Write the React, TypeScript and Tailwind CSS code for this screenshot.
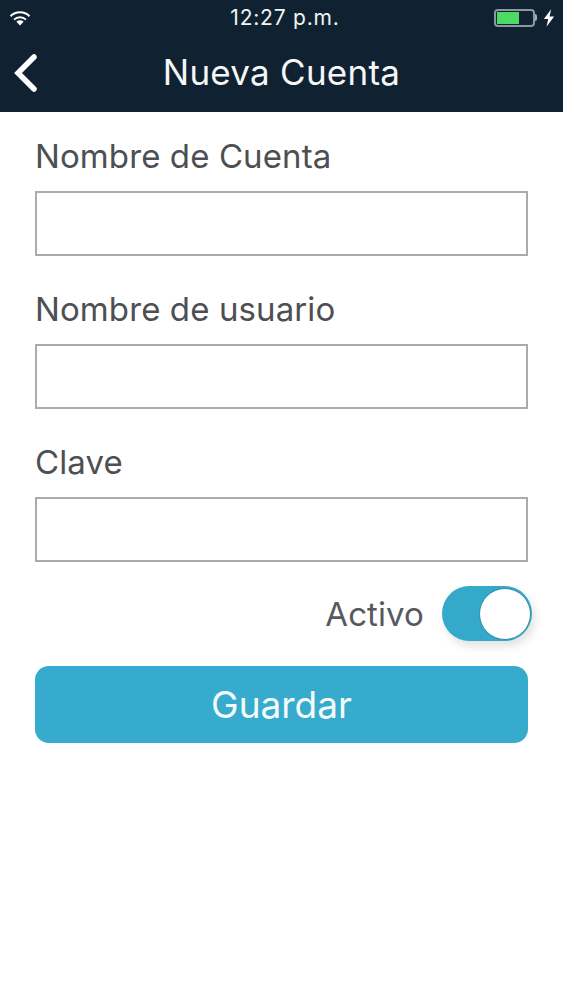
import React from "react";

function Field({ label }: { label: string }) {
  return (
    <div className="flex flex-col">
      <div className="h-[40px] flex items-center text-[33px] leading-[40px] text-[#4d4f52] tracking-[0.1px] mt-[-1px] mb-[1px]">{label}</div>
      <div className="mt-[14px] h-[65px] border-2 border-[#ababab] bg-white" />
    </div>
  );
}

export default function App() {
  return (
    <div className="w-[563px] h-[1000px] bg-white overflow-hidden font-['Inter','Liberation_Sans',sans-serif]">
      <header className="h-[112px] bg-[#102231] text-white flex flex-col">
        <div className="h-[36px] px-[9px] flex items-center justify-between relative">
          <svg width="22" height="16" viewBox="0 0 22 16">
            <path d="M1.5 6.2 A13.5 13.5 0 0 1 20.5 6.2" fill="none" stroke="white" strokeWidth="2" />
            <path d="M5 9.6 A8.6 8.6 0 0 1 17 9.6" fill="none" stroke="white" strokeWidth="2" />
            <path d="M11 15.5 L7.4 11.8 A5.2 5.2 0 0 1 14.6 11.8 Z" fill="white" />
          </svg>
          <div className="absolute left-0 right-0 pl-[7px] text-center text-[21px] leading-[36px] tracking-[0.8px] text-[#f2f4f5]">12:27 p.m.</div>
          <div className="flex items-center gap-[3px] mt-[-1px] mr-[-1px]">
            <div className="w-[41px] h-[18px] border-2 border-[#8d979e] rounded-[4px] p-[1px] flex">
              <div className="w-[22px] bg-[#4cd964]" />
            </div>
            <div className="w-[2px] h-[7px] bg-[#a5adb3] ml-[-3px] rounded-r-[2px]" />
            <svg width="12" height="18" viewBox="0 0 11 16" className="ml-[3px]">
              <path d="M7.5 0 L0.8 9 H4.8 L3.2 16 L10.2 6.6 H6 Z" fill="white" />
            </svg>
          </div>
        </div>
        <div className="flex-1 relative flex items-center justify-center">
          <svg width="26" height="40" viewBox="0 0 26 40" className="absolute left-[13px] top-[17px]">
            <path d="M21 4 L5 20 L21 36" fill="none" stroke="white" strokeWidth="5.5" strokeLinecap="round" strokeLinejoin="miter" />
          </svg>
          <h1 className="text-[35px] leading-[44px] font-normal tracking-[0.25px] mt-[-5px] text-[#f5f6f7]">Nueva Cuenta</h1>
        </div>
      </header>

      <main className="px-[35px] pt-[25px]">
        <div className="flex flex-col gap-[34px]">
          <Field label="Nombre de Cuenta" />
          <Field label="Nombre de usuario" />
          <Field label="Clave" />
        </div>
        <div className="mt-[24px] mr-[-4px] flex items-center justify-end gap-[18px]">
          <span className="text-[33px] leading-[54px] text-[#58595c] tracking-[0.1px]">Activo</span>
          <div className="w-[90px] h-[55px] rounded-full bg-[#34a9ca] flex items-center justify-end pr-[1px] shadow-[3px_5px_10px_rgba(0,0,0,0.12)]">
            <div className="w-[52px] h-[52px] rounded-full bg-white border border-[#2b8ea8]" />
          </div>
        </div>
        <button className="mt-[25px] w-full h-[77px] rounded-[14px] bg-[#36abcd] text-[#f4fbfd] text-[37px] leading-[77px] text-center">
          Guardar
        </button>
      </main>
    </div>
  );
}
